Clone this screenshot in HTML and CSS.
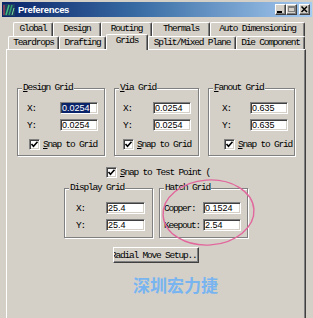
FILE: index.html
```html
<!DOCTYPE html>
<html>
<head>
<meta charset="utf-8">
<title>Preferences</title>
<link rel="stylesheet" href="styles.css">
</head>
<body>
<div class="window">
  <div class="titlebar">
    <svg class="app-icon" width="12" height="12" viewBox="0 0 12 12">
      <rect x="0" y="0" width="12" height="12" fill="#1d3d63"/>
      <path d="M1 1 V11" stroke="#c0405a" stroke-width="1.2"/>
      <path d="M3 11 L6 1" stroke="#3fbf7f" stroke-width="1.5"/>
      <path d="M6 11 L9 1" stroke="#2f9f6f" stroke-width="1.5"/>
      <path d="M9 11 L11 4" stroke="#7fdf9f" stroke-width="1"/>
    </svg>
    <span class="title">Preferences</span>
    <div class="caption-buttons">
      <span class="cbtn"><svg width="9" height="9" viewBox="0 0 9 9"><rect x="1" y="6" width="5" height="2" fill="#000"/></svg></span>
      <span class="cbtn"><svg width="9" height="9" viewBox="0 0 9 9"><rect x="1.5" y="1.5" width="6" height="5" fill="none" stroke="#808080"/><rect x="1" y="1" width="7" height="2" fill="#808080"/></svg></span>
      <span class="cbtn close"><svg width="9" height="9" viewBox="0 0 9 9"><path d="M1.5 1.5 L7 7 M7 1.5 L1.5 7" stroke="#000" stroke-width="1.5"/></svg></span>
    </div>
  </div>

  <div class="tabs">
    <div class="tabrow back">
      <div class="tab t-global">Global</div>
      <div class="tab t-design">Design</div>
      <div class="tab t-routing">Routing</div>
      <div class="tab t-thermals">Thermals</div>
      <div class="tab t-auto">Auto Dimensioning</div>
    </div>
    <div class="tabrow front">
      <div class="tab t-teardrops">Teardrops</div>
      <div class="tab t-drafting">Drafting</div>
      <div class="tab t-grids active">Grids</div>
      <div class="tab t-split">Split/Mixed Plane</div>
      <div class="tab t-die">Die Component</div>
    </div>
  </div>

  <div class="panel">
    <div class="group-row top-row">
      <div class="group g-design">
        <div class="group-title"><u>D</u>esign Grid</div>
        <div class="group-body">
          <div class="field"><span class="lbl">X:</span><span class="input"><span class="sel">0.0254</span></span></div>
          <div class="field"><span class="lbl">Y:</span><span class="input">0.0254</span></div>
          <div class="check"><span class="box"><svg width="9" height="9" viewBox="0 0 9 9"><path d="M1.5 4 L3.5 6.3 L7.5 1.8" fill="none" stroke="#000" stroke-width="1.6"/></svg></span><span><u>S</u>nap to Grid</span></div>
        </div>
      </div>
      <div class="group g-via">
        <div class="group-title"><u>V</u>ia Grid</div>
        <div class="group-body">
          <div class="field"><span class="lbl">X:</span><span class="input">0.0254</span></div>
          <div class="field"><span class="lbl">Y:</span><span class="input">0.0254</span></div>
          <div class="check"><span class="box"><svg width="9" height="9" viewBox="0 0 9 9"><path d="M1.5 4 L3.5 6.3 L7.5 1.8" fill="none" stroke="#000" stroke-width="1.6"/></svg></span><span><u>S</u>nap to Grid</span></div>
        </div>
      </div>
      <div class="group g-fanout">
        <div class="group-title"><u>F</u>anout Grid</div>
        <div class="group-body">
          <div class="field"><span class="lbl">X:</span><span class="input">0.635</span></div>
          <div class="field"><span class="lbl">Y:</span><span class="input">0.635</span></div>
          <div class="check"><span class="box"><svg width="9" height="9" viewBox="0 0 9 9"><path d="M1.5 4 L3.5 6.3 L7.5 1.8" fill="none" stroke="#000" stroke-width="1.6"/></svg></span><span><u>S</u>nap to Grid</span></div>
        </div>
      </div>
    </div>

    <div class="check test-point"><span class="box"><svg width="9" height="9" viewBox="0 0 9 9"><path d="M1.5 4 L3.5 6.3 L7.5 1.8" fill="none" stroke="#000" stroke-width="1.6"/></svg></span><span><u>S</u>nap to Test Point (</span></div>

    <div class="group-row bottom-row">
      <div class="group g-display">
        <div class="group-title">Display Grid</div>
        <div class="group-body">
          <div class="field"><span class="lbl">X:</span><span class="input">25.4</span></div>
          <div class="field"><span class="lbl">Y:</span><span class="input">25.4</span></div>
        </div>
      </div>
      <div class="group g-hatch">
        <div class="group-title">Hatch Grid</div>
        <div class="group-body">
          <div class="field"><span class="lbl">Copper:</span><span class="input">0.1524</span></div>
          <div class="field"><span class="lbl">Keepout:</span><span class="input">2.54</span></div>
        </div>
      </div>
    </div>

    <div class="btn"><span>Radial Move Setup...</span></div>
  </div>
</div>

<div class="watermark">深圳宏力捷</div>
<svg class="annotation" width="313" height="318" viewBox="0 0 313 318">
  <ellipse cx="208.5" cy="212.5" rx="45.5" ry="32.5" transform="rotate(-4 208.5 212.5)" fill="none" stroke="#e2679c" stroke-width="1.4"/>
</svg>
</body>
</html>
```

FILE: styles.css
```css
* { box-sizing: border-box; }
html, body { margin: 0; padding: 0; }
body {
  width: 313px;
  height: 318px;
  overflow: hidden;
  position: relative;
  background: #d4d0c8;
  color: #000;
  font-family: "Liberation Mono", "DejaVu Sans Mono", monospace;
  font-size: 9.5px;
  letter-spacing: -1.2px;
}
.window {
  padding: 2px 0 0 2px;
  height: 318px;
}

/* title bar */
.titlebar {
  height: 15px;
  width: 310px;
  display: flex;
  align-items: center;
  padding: 0 2px 0 1px;
  background: linear-gradient(to right, #0a246a 0%, #3a6ea5 45%, #a6caf0 100%);
}
.app-icon { flex: none; margin-right: 3px; }
.title {
  font-family: "Liberation Sans", Arial, sans-serif;
  font-weight: bold;
  font-size: 9.5px;
  letter-spacing: -0.3px;
  color: #fff;
}
.caption-buttons { margin-left: auto; display: flex; }
.cbtn {
  width: 11px;
  height: 11px;
  display: flex;
  align-items: center;
  justify-content: center;
  background: #d4d0c8;
  border: 1px solid;
  border-color: #fff #404040 #404040 #fff;
  box-shadow: inset -1px -1px 0 #808080;
}
.cbtn.close { margin-left: 2px; }

/* tabs */
.tabs { padding-top: 5px; }
.tabrow { display: flex; }
.tabrow.back { margin-left: 11px; height: 14px; }
.tabrow.front { margin-left: 6px; height: 13px; }
.tab {
  height: 100%;
  flex: none;
  text-align: center;
  white-space: nowrap;
  line-height: 12px;
  background: #d4d0c8;
  border-top: 1px solid #fff;
  border-left: 1px solid #fff;
  border-right: 1px solid #404040;
  box-shadow: inset -1px 0 0 #808080;
  border-radius: 2px 2px 0 0;
}
.tab.active {
  height: 16px;
  margin-top: -2px;
  position: relative;
  z-index: 1;
  line-height: 12px;
}
.t-global { width: 40px; }
.t-design { width: 48px; }
.t-routing { width: 51px; }
.t-thermals { width: 58px; }
.t-auto { width: 95px; }
.t-teardrops { width: 51px; }
.t-drafting { width: 47px; }
.t-grids { width: 42px; }
.t-split { width: 88px; }
.t-die { width: 69px; }

/* panel */
.panel {
  margin-left: 4px;
  width: 300px;
  height: 280px;
  padding-top: 32px;
  display: flex;
  flex-direction: column;
  align-items: center;
  border-top: 1px solid #fff;
  border-left: 1px solid #fff;
  border-right: 1px solid #404040;
  box-shadow: inset -1px 0 0 #808080;
}

.group-row { display: flex; }
.top-row { column-gap: 9px; }
.bottom-row { column-gap: 6px; margin-top: 4px; }

.group {
  margin-top: 6px;
  border: 1px solid #808080;
  box-shadow: 1px 1px 0 #fff, inset 1px 1px 0 #fff;
}
.group-title {
  width: fit-content;
  margin: -7px 0 0 4px;
  padding: 0 1px;
  line-height: 12px;
  height: 12px;
  background: #d4d0c8;
  white-space: nowrap;
}
.group-body {
  padding: 8px 6px 5px 9px;
  display: flex;
  flex-direction: column;
  gap: 5px;
}
.g-design { width: 88px; }
.g-via { width: 85px; }
.g-via .group-body { padding-left: 8px; padding-right: 7px; }
.g-fanout { width: 87px; }
.g-fanout .group-body { padding-left: 13px; }
.g-fanout .check { margin-left: -4px; }
.g-display { width: 89px; }
.g-display .group-body { padding: 8px 7px 6px 11px; }
.g-hatch { width: 89px; }
.g-hatch .group-body { padding: 8px 6px 6px 4px; }

.field {
  display: flex;
  justify-content: space-between;
  align-items: center;
  height: 12px;
}
.lbl { white-space: nowrap; }
.input {
  width: 38px;
  height: 12px;
  display: flex;
  align-items: center;
  padding-left: 1px;
  background: #fff;
  border: 1px solid;
  border-color: #808080 #fff #fff #808080;
  box-shadow: inset 1px 1px 0 #404040, inset -1px -1px 0 #d4d0c8;
  font-family: "Liberation Sans", Arial, sans-serif;
  font-size: 9px;
  letter-spacing: 0;
  line-height: 10px;
  overflow: hidden;
  white-space: nowrap;
}
.g-display .input { width: 39px; }
.sel { background: #0a246a; color: #fff; }

.check {
  display: flex;
  align-items: center;
  gap: 3px;
  height: 11px;
  white-space: nowrap;
}
.group-body .check { margin-top: 3px; margin-left: 2px; }
.g-via .group-body .check { margin-left: 0; }
.box {
  width: 11px;
  height: 11px;
  flex: none;
  display: flex;
  align-items: center;
  justify-content: center;
  background: #fff;
  border: 1px solid;
  border-color: #808080 #fff #fff #808080;
  box-shadow: inset 1px 1px 0 #404040, inset -1px -1px 0 #d4d0c8;
}
.test-point { margin-top: 11px; margin-left: 4px; }

.btn {
  margin-top: 9px;
  width: 86px;
  height: 16px;
  display: flex;
  align-items: center;
  justify-content: center;
  overflow: hidden;
  white-space: nowrap;
  border: 1px solid;
  border-color: #fff #404040 #404040 #fff;
  box-shadow: inset -1px -1px 0 #808080;
}

/* overlays: watermark and annotation */
.watermark {
  position: absolute;
  left: 133px;
  top: 275px;
  font-family: "Noto Sans CJK SC", sans-serif;
  font-weight: bold;
  font-size: 17px;
  line-height: 20px;
  letter-spacing: 0;
  color: #78b4f0;
}
.annotation {
  position: absolute;
  left: 0;
  top: 0;
  pointer-events: none;
}
```
